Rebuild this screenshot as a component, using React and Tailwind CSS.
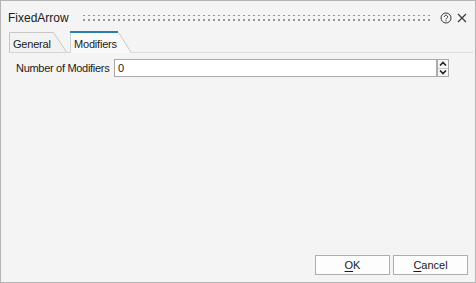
import React from "react";

const font = { fontFamily: '"Liberation Sans", Arial, sans-serif' };

function Grip() {
  return (
    <svg className="flex-1 h-[8px]" preserveAspectRatio="none">
      <defs>
        <pattern id="grip" width="5" height="5" patternUnits="userSpaceOnUse">
          <rect x="0" y="0" width="2" height="2" fill="#969696" />
        </pattern>
      </defs>
      <rect x="0" y="1" width="100%" height="7" fill="url(#grip)" />
    </svg>
  );
}

function HelpIcon() {
  return (
    <svg width="12" height="12" viewBox="0 0 12 12" fill="none">
      <circle cx="6" cy="6" r="5" stroke="#3a3a3a" strokeWidth="1" />
      <path
        d="M4.4 4.9a1.6 1.6 0 1 1 2.5 1.3c-.6.4-.9.6-.9 1.3"
        stroke="#3a3a3a"
        strokeWidth="1"
      />
      <rect x="5.5" y="8.3" width="1" height="1" fill="#3a3a3a" />
    </svg>
  );
}

function CloseIcon() {
  return (
    <svg width="10" height="10" viewBox="0 0 10 10">
      <path d="M1 1L9 9M9 1L1 9" stroke="#3a3a3a" strokeWidth="1.2" />
    </svg>
  );
}

function Arrow({ up }) {
  return (
    <svg width="8" height="5" viewBox="0 0 8 5">
      <path
        d={up ? "M1 4.5L4 1.5L7 4.5" : "M1 0.5L4 3.5L7 0.5"}
        stroke="#222"
        strokeWidth="1.6"
        fill="none"
      />
    </svg>
  );
}

function Button({ mnemonic, rest }) {
  return (
    <button className="w-[75px] h-[20px] bg-[#fdfdfd] border border-[#adadad] text-[11px] text-[#1a1a1a] flex items-center justify-center">
      <span>
        <span className="underline underline-offset-2">{mnemonic}</span>
        {rest}
      </span>
    </button>
  );
}

export default function App() {
  return (
    <div
      style={font}
      className="w-[476px] h-[283px] border border-[#b5b5b5] bg-[#f4f4f4] flex flex-col text-[#1a1a1a]"
    >
      {/* TITLE BAR */}
      <div className="h-[30px] pt-[3px] pl-[7px] pr-[8px] flex items-center">
        <span className="text-[12px] text-[#202020]">FixedArrow</span>
        <div className="flex-1 ml-[14px] mr-[7px] flex items-center">
          <Grip />
        </div>
        <HelpIcon />
        <div className="ml-[5px]">
          <CloseIcon />
        </div>
      </div>

      {/* TABS */}
      <div className="h-[22px] pl-[8px] pr-[2px] flex items-end">
        <div className="relative w-[58px] h-[21px] text-[11px] tracking-[-0.2px]">
          <svg className="absolute inset-0" width="58" height="21">
            <path d="M0.5 20 V0.5 H44.5 L57.5 20 Z" fill="#f2f2f2" />
            <path d="M0.5 20 V0.5 H44.5 L57.5 20" stroke="#c6c6c6" fill="none" />
            <path d="M0 20.5 H58" stroke="#d6d6d6" />
          </svg>
          <span className="relative block pl-[4px] pt-[4px]">General</span>
        </div>
        <div className="w-[3px] h-[1px] bg-[#d6d6d6]" />
        <div className="relative w-[62px] h-[22px] text-[11px] tracking-[-0.2px]">
          <svg className="absolute inset-0" width="62" height="22">
            <path d="M0 1 H48 L62 22 H0 Z" fill="#f9f9f9" />
            <path d="M0.5 2 V22" stroke="#d2d2d2" />
            <path d="M48.5 1.5 L61.5 22" stroke="#c6c6c6" fill="none" />
            <path d="M0 1 H48" stroke="#2a7db3" strokeWidth="2" />
          </svg>
          <span className="relative block pl-[4px] pt-[5px]">Modifiers</span>
        </div>
        <div className="flex-1 h-[1px] bg-[#dcdcdc]" />
      </div>

      {/* CONTENT */}
      <div className="mt-[6px] pl-[15px] flex items-center">
        <span className="text-[11px] tracking-[-0.3px] w-[98px]">Number of Modifiers</span>
        <div className="w-[323px] h-[18px] bg-white border border-[#a9a9a9] flex items-center pl-[3px] text-[11px]">
          0
        </div>
        <div className="w-[12px] h-[18px] border border-[#a9a9a9] flex flex-col bg-[#f7f7f7]">
          <div className="flex-1 flex items-center justify-center border-b border-[#c8c8c8]">
            <Arrow up />
          </div>
          <div className="flex-1 flex items-center justify-center">
            <Arrow />
          </div>
        </div>
      </div>

      <div className="flex-1" />

      {/* FOOTER */}
      <div className="flex justify-end gap-[3px] pr-[7px] pb-[7px]">
        <Button mnemonic="O" rest="K" />
        <Button mnemonic="C" rest="ancel" />
      </div>
    </div>
  );
}
